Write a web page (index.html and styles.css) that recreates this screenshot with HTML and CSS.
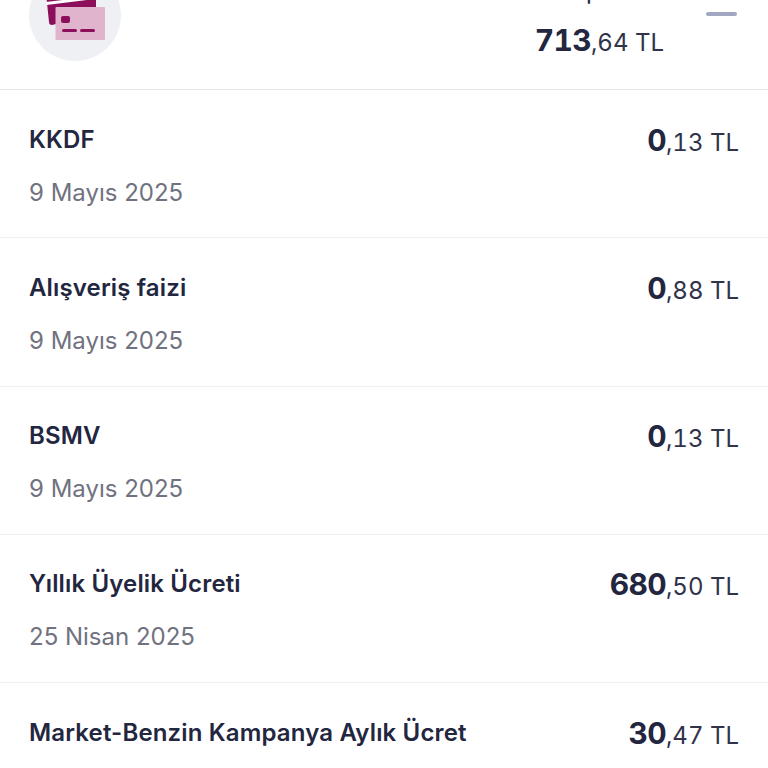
FILE: index.html
```html
<!DOCTYPE html>
<html lang="tr">
<head>
    <meta charset="UTF-8">
    <meta name="viewport" content="width=device-width, initial-scale=1.0">
    <title>Kart hareketleri</title>
    <link rel="stylesheet" href="styles.css">
</head>
<body>
    <div class="page">
        <div class="summary">
            <div class="card-icon">
                <svg width="92" height="92" viewBox="0 0 92 92">
                    <path d="M17 24 L65 18 Q67 18 67 20 L67 40 L28 40 L27 55 L23 56 Q20 56 20 53 Z" fill="#8c0f5b"/>
                    <path d="M17 33 L66 27 L66 30 L17.5 36 Z" fill="#ffffff"/>
                    <rect x="26.5" y="38" width="49.5" height="33" rx="1" fill="#e0b4cd"/>
                    <rect x="32" y="47" width="9" height="7" rx="2" fill="#8c0f5b"/>
                    <rect x="33" y="60" width="15" height="3" rx="1.5" fill="#8c0f5b"/>
                    <rect x="51" y="60" width="15" height="3" rx="1.5" fill="#8c0f5b"/>
                </svg>
            </div>
            <div class="total">
                <div class="total-label">Toplam</div>
                <div class="amount"><b>713</b>,64 TL</div>
            </div>
            <div class="collapse"></div>
        </div>

        <div class="row">
            <div class="info">
                <div class="name">KKDF</div>
                <div class="date">9 Mayıs 2025</div>
            </div>
            <div class="amount"><b>0</b>,13 TL</div>
        </div>
        <div class="row">
            <div class="info">
                <div class="name">Alışveriş faizi</div>
                <div class="date">9 Mayıs 2025</div>
            </div>
            <div class="amount"><b>0</b>,88 TL</div>
        </div>
        <div class="row">
            <div class="info">
                <div class="name">BSMV</div>
                <div class="date">9 Mayıs 2025</div>
            </div>
            <div class="amount"><b>0</b>,13 TL</div>
        </div>
        <div class="row">
            <div class="info">
                <div class="name">Yıllık Üyelik Ücreti</div>
                <div class="date">25 Nisan 2025</div>
            </div>
            <div class="amount"><b>680</b>,50 TL</div>
        </div>
        <div class="row">
            <div class="info">
                <div class="name">Market-Benzin Kampanya Aylık Ücret</div>
            </div>
            <div class="amount"><b>30</b>,47 TL</div>
        </div>
    </div>
</body>
</html>
```

FILE: styles.css
```css
html, body {
    margin: 0;
    height: 100%;
    overflow: hidden;
    background: #fff;
}
body {
    font-family: 'Inter', 'Noto Sans', sans-serif;
    color: #23263f;
}
.page {
    margin-top: -31px;
}
.summary {
    display: flex;
    align-items: flex-start;
    height: 120px;
    padding: 0 31px 0 29px;
    border-bottom: 1px solid #e6e7ea;
}
.card-icon {
    width: 92px;
    height: 92px;
    border-radius: 50%;
    background: #eff0f4;
}
.card-icon svg {
    display: block;
}
.total {
    margin-left: auto;
    padding-top: 7px;
}
.total-label {
    font-size: 24px;
    line-height: 30px;
    text-align: center;
}
.total .amount {
    margin-top: 16px;
}
.collapse {
    width: 31px;
    height: 4px;
    margin: 43px 0 0 42px;
    border-radius: 2px;
    background: #a3a8c2;
}
.row {
    display: flex;
    justify-content: space-between;
    align-items: flex-start;
    box-sizing: border-box;
    height: 148.25px;
    padding: 31.5px 29px 0;
    border-bottom: 1px solid #f0f1f3;
}
.row:last-child {
    height: 85px;
    border-bottom: none;
}
.name {
    font-size: 24px;
    font-weight: 600;
    line-height: 36px;
    letter-spacing: 0.15px;
}
.date {
    margin-top: 17px;
    font-size: 24px;
    line-height: 36px;
    color: #70727f;
}
.amount {
    font-size: 24px;
    line-height: 36px;
    color: #30334a;
    font-feature-settings: "tnum";
}
.amount b {
    font-size: 30px;
    font-weight: 700;
    letter-spacing: -0.7px;
    color: #23263f;
}
```
